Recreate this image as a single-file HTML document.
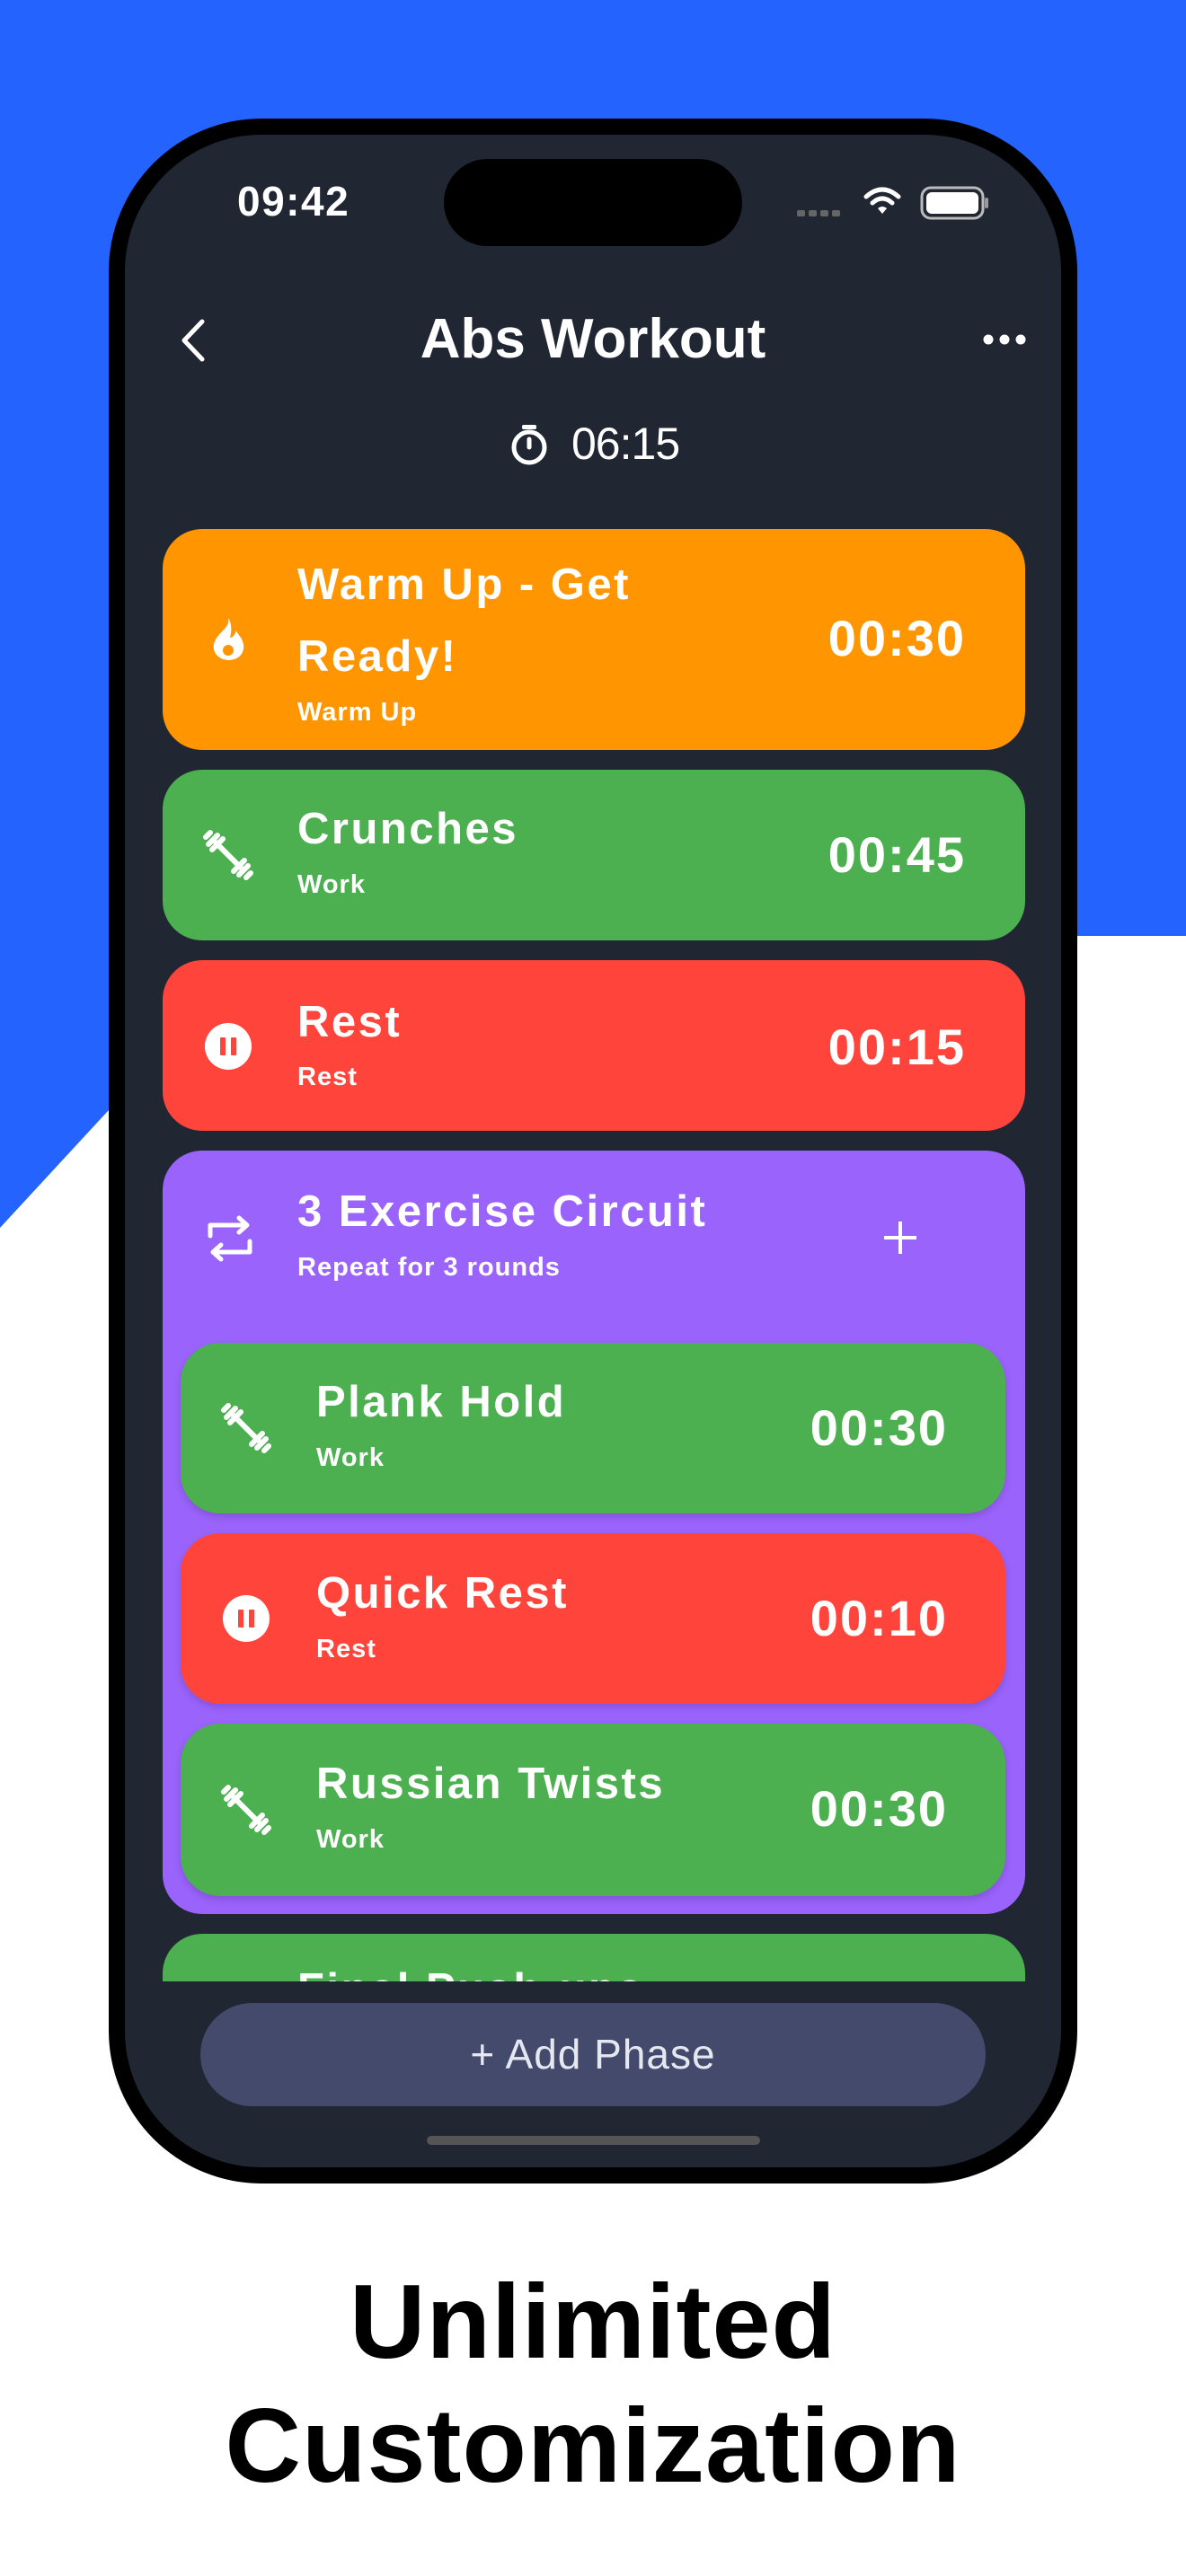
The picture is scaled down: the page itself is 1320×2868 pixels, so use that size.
<!DOCTYPE html>
<html><head><meta charset="utf-8"><style>
*{margin:0;padding:0;box-sizing:border-box}
body{width:1320px;height:2868px;position:relative;background:#fff;overflow:hidden;font-family:"Liberation Sans",sans-serif;color:#fff}
.abs{position:absolute}
.card{position:absolute;border-radius:44px}
.t{position:absolute;font-weight:bold;font-size:49px;letter-spacing:2.5px;line-height:60px;white-space:nowrap}
.s{position:absolute;font-weight:bold;font-size:29px;letter-spacing:1px;line-height:36px;white-space:nowrap}
.tm{position:absolute;font-weight:bold;font-size:56px;letter-spacing:2px;line-height:60px;text-align:right;white-space:nowrap}
.ic{position:absolute}
</style></head><body>
<svg class="abs" style="left:0;top:0" width="1320" height="2868"><polygon points="0,0 1320,0 1320,1042 300,1042 0,1367" fill="#2563FE"/></svg>
<div class="abs" style="left:121px;top:132px;width:1078px;height:2299px;background:#000;border-radius:170px"></div>
<div class="abs" style="left:139px;top:150px;width:1042px;height:2263px;background:#202632;border-radius:152px;overflow:hidden"></div>
<div class="abs" style="left:494px;top:177px;width:332px;height:97px;background:#000;border-radius:49px"></div>
<div class="abs" style="left:264px;top:197px;font-size:46px;font-weight:bold;line-height:54px;letter-spacing:1.5px">09:42</div>
<svg class="abs" style="left:880px;top:195px" width="230" height="60">
<g fill="#666"><rect x="7" y="39" width="9" height="7" rx="2"/><rect x="20" y="39" width="9" height="7" rx="2"/><rect x="33" y="39" width="9" height="7" rx="2"/><rect x="46" y="39" width="9" height="7" rx="2"/></g>
<g fill="none" stroke="#fff" stroke-width="5" stroke-linecap="round"><path d="M84 24 Q102 8 120 24"/><path d="M91 31 Q102 21 113 31"/></g><path d="M97 37 L102 43 L107 37 Q102 33 97 37Z" fill="#fff"/>
<rect x="146" y="14" width="68" height="34" rx="10" fill="none" stroke="#bbb" stroke-width="3"/><rect x="151" y="19" width="58" height="24" rx="6" fill="#fff"/><rect x="216" y="25" width="4" height="12" rx="2" fill="#999"/>
</svg>
<svg class="abs" style="left:195px;top:352px" width="40" height="54"><path d="M30 6 L10 27 L30 48" fill="none" stroke="#fff" stroke-width="5" stroke-linecap="round" stroke-linejoin="round"/></svg>
<div class="abs" style="left:360px;width:600px;top:343px;text-align:center;font-size:62px;font-weight:bold;line-height:70px">Abs Workout</div>
<svg class="abs" style="left:1092px;top:368px" width="52" height="20"><circle cx="8" cy="10" r="5.5" fill="#fff"/><circle cx="26" cy="10" r="5.5" fill="#fff"/><circle cx="44" cy="10" r="5.5" fill="#fff"/></svg>
<svg class="abs" style="left:566px;top:470px" width="46" height="50"><rect x="15" y="3" width="16" height="5" rx="2" fill="#fff"/><circle cx="23" cy="28" r="17" fill="none" stroke="#fff" stroke-width="5"/><path d="M23 28 V19" stroke="#fff" stroke-width="5" stroke-linecap="round"/></svg>
<div class="abs" style="left:636px;top:464px;font-size:50px;line-height:60px;color:#fff;font-weight:300;letter-spacing:-1px">06:15</div>

<div class="card" style="left:181px;top:589px;width:960px;height:246px;background:#FF9500"></div>
<svg class="ic" style="left:230px;top:686px" width="50" height="52"><path d="M24 2 C26 12 16 16 10 26 C4 36 10 48 24 49 C38 49 44 38 40 28 C38 22 34 20 33 16 C31 22 28 24 26 24 C28 16 28 8 24 2Z" fill="#fff"/><circle cx="24" cy="38" r="6" fill="#FF9500"/></svg>
<div class="t" style="left:331px;top:621px">Warm Up - Get</div>
<div class="t" style="left:331px;top:701px">Ready!</div>
<div class="s" style="left:331px;top:775px">Warm Up</div>
<div class="tm" style="right:245px;top:681px">00:30</div>

<div class="card" style="left:181px;top:857px;width:960px;height:190px;background:#4CAF50"></div>
<svg class="ic" style="left:226px;top:924px" width="56" height="56"><g stroke="#fff" stroke-width="6" stroke-linecap="round"><path d="M14 14 L42 42"/><path d="M6 16 L16 6"/><path d="M10 22 L22 10"/><path d="M34 46 L46 34"/><path d="M40 50 L50 40"/><path d="M3 8 L8 3"/><path d="M48 53 L53 48"/></g></svg>
<div class="t" style="left:331px;top:893px">Crunches</div>
<div class="s" style="left:331px;top:967px">Work</div>
<div class="tm" style="right:245px;top:922px">00:45</div>

<div class="card" style="left:181px;top:1069px;width:960px;height:190px;background:#FF453B"></div>
<svg class="ic" style="left:227px;top:1138px" width="54" height="54"><circle cx="27" cy="27" r="26" fill="#fff"/><rect x="18" y="17" width="6" height="20" rx="1" fill="#FF453B"/><rect x="30" y="17" width="6" height="20" rx="1" fill="#FF453B"/></svg>
<div class="t" style="left:331px;top:1108px">Rest</div>
<div class="s" style="left:331px;top:1181px">Rest</div>
<div class="tm" style="right:245px;top:1136px">00:15</div>

<div class="card" style="left:181px;top:1281px;width:960px;height:850px;background:#9A63FC"></div>
<svg class="ic" style="left:228px;top:1352px" width="56" height="54"><g fill="none" stroke="#fff" stroke-width="5" stroke-linecap="round" stroke-linejoin="round"><path d="M6 24 V12 H46"/><path d="M38 4 L47 12 L38 20"/><path d="M50 30 V42 H10"/><path d="M18 34 L9 42 L18 50"/></g></svg>
<div class="t" style="left:331px;top:1319px">3 Exercise Circuit</div>
<div class="s" style="left:331px;top:1393px">Repeat for 3 rounds</div>
<svg class="ic" style="left:982px;top:1358px" width="40" height="40"><path d="M20 2 V38 M2 20 H38" stroke="#fff" stroke-width="4"/></svg>

<div class="card" style="left:201px;top:1495px;width:918px;height:190px;background:#4CAF50;box-shadow:0 4px 8px rgba(0,0,0,.15)"></div>
<svg class="ic" style="left:246px;top:1562px" width="56" height="56"><g stroke="#fff" stroke-width="6" stroke-linecap="round"><path d="M14 14 L42 42"/><path d="M6 16 L16 6"/><path d="M10 22 L22 10"/><path d="M34 46 L46 34"/><path d="M40 50 L50 40"/><path d="M3 8 L8 3"/><path d="M48 53 L53 48"/></g></svg>
<div class="t" style="left:352px;top:1531px">Plank Hold</div>
<div class="s" style="left:352px;top:1605px">Work</div>
<div class="tm" style="right:265px;top:1560px">00:30</div>

<div class="card" style="left:201px;top:1707px;width:918px;height:190px;background:#FF453B;box-shadow:0 4px 8px rgba(0,0,0,.15)"></div>
<svg class="ic" style="left:247px;top:1775px" width="54" height="54"><circle cx="27" cy="27" r="26" fill="#fff"/><rect x="18" y="17" width="6" height="20" rx="1" fill="#FF453B"/><rect x="30" y="17" width="6" height="20" rx="1" fill="#FF453B"/></svg>
<div class="t" style="left:352px;top:1744px">Quick Rest</div>
<div class="s" style="left:352px;top:1818px">Rest</div>
<div class="tm" style="right:265px;top:1772px">00:10</div>

<div class="card" style="left:201px;top:1919px;width:918px;height:192px;background:#4CAF50;box-shadow:0 4px 8px rgba(0,0,0,.15)"></div>
<svg class="ic" style="left:246px;top:1987px" width="56" height="56"><g stroke="#fff" stroke-width="6" stroke-linecap="round"><path d="M14 14 L42 42"/><path d="M6 16 L16 6"/><path d="M10 22 L22 10"/><path d="M34 46 L46 34"/><path d="M40 50 L50 40"/><path d="M3 8 L8 3"/><path d="M48 53 L53 48"/></g></svg>
<div class="t" style="left:352px;top:1956px">Russian Twists</div>
<div class="s" style="left:352px;top:2030px">Work</div>
<div class="tm" style="right:265px;top:1984px">00:30</div>

<div class="abs" style="left:181px;top:2153px;width:960px;height:53px;overflow:hidden">
<div class="abs" style="left:0;top:0;width:960px;height:200px;background:#4CAF50;border-radius:44px"></div>
<div class="t" style="left:150px;top:32px">Final Push-ups</div>
</div>

<div class="abs" style="left:223px;top:2230px;width:874px;height:115px;background:#434A6B;border-radius:58px;text-align:center;font-size:46px;line-height:115px;font-weight:300;color:#e6e8f0;letter-spacing:1px">+ Add Phase</div>
<div class="abs" style="left:475px;top:2378px;width:371px;height:10px;border-radius:5px;background:#555"></div>

<div class="abs" style="left:0;width:1320px;top:2516px;text-align:center;color:#000;font-size:117px;font-weight:bold;line-height:138px;letter-spacing:1px">Unlimited<br>Customization</div>
</body></html>
